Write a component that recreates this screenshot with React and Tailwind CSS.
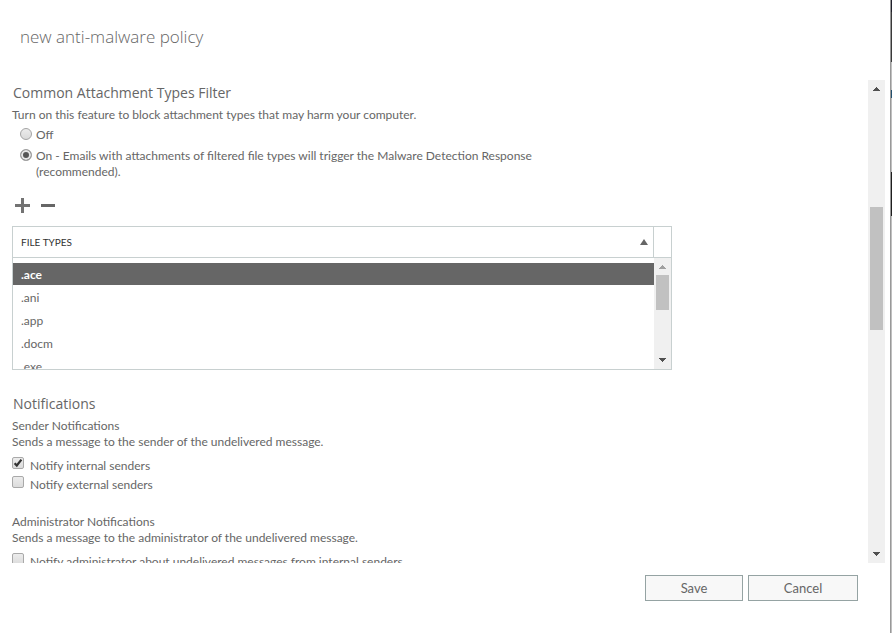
import React, { useState } from "react";

const fileTypes = [".ace", ".ani", ".app", ".docm", ".exe"];

const ArrowUp = ({ className }) => (
  <svg className={className} width="7" height="4" viewBox="0 0 7 4" shapeRendering="crispEdges" aria-hidden="true">
    <path fill="currentColor" d="M3 0h1v1h1v1h1v1h1v1H0V3h1V2h1V1h1z" />
  </svg>
);

const ArrowDown = ({ className }) => (
  <svg className={className} width="7" height="4" viewBox="0 0 7 4" shapeRendering="crispEdges" aria-hidden="true">
    <path fill="currentColor" d="M0 0h7v1H6v1H5v1H4v1H3V3H2V2H1V1H0z" />
  </svg>
);

const Radio = ({ id, checked, onChange, children }) => (
  <div className="flex items-start gap-1 pl-2">
    <input
      id={id}
      type="radio"
      name="filter"
      checked={checked}
      onChange={onChange}
      className="mt-px size-3 shrink-0 appearance-none rounded-full border border-[#a3a3a3] bg-linear-to-b from-[#ececec] to-[#dadada] checked:bg-none checked:bg-[#555] checked:shadow-[inset_0_0_0_2px_#e6e6e6]"
    />
    <label htmlFor={id} className="max-w-[520px]">
      {children}
    </label>
  </div>
);

const Checkbox = ({ id, defaultChecked, children }) => (
  <div className="flex h-[19px] items-start gap-1.5">
    <span className="relative mt-px size-3 shrink-0">
      <input
        id={id}
        type="checkbox"
        defaultChecked={defaultChecked}
        className="peer block size-3 appearance-none rounded-xs border border-[#a9a9a9] bg-linear-to-b from-[#ececec] to-[#dcdcdc]"
      />
      <svg
        className="pointer-events-none absolute inset-0 hidden peer-checked:block"
        width="12"
        height="12"
        viewBox="0 0 12 12"
        aria-hidden="true"
      >
        <path d="M2.6 6.2l2.2 2.3L9.4 2.6" fill="none" stroke="#333" strokeWidth="2.2" />
      </svg>
    </span>
    <label htmlFor={id} className="pt-0.5">
      {children}
    </label>
  </div>
);

const App = () => {
  const [filter, setFilter] = useState("on");
  const [selected, setSelected] = useState(".ace");

  return (
    <div className="flex h-screen bg-white font-[Lato,sans-serif] text-[12px] leading-4 text-[#666]">
      <div className="flex min-w-0 flex-1 flex-col">
        <header className="flex h-20 shrink-0 items-start px-5 pt-6">
          <h1 className="font-['Open_Sans',sans-serif] text-[17px] leading-[26px] font-light">
            new anti-malware policy
          </h1>
        </header>

        <div className="flex min-h-0 flex-1 pr-[5px]">
          <main className="min-w-0 flex-1 overflow-y-auto pl-3 [scrollbar-width:none]">
            <section>
              <h2 className="pl-px font-['Open_Sans',sans-serif] text-[14px] leading-[26px]">
                Common Attachment Types Filter
              </h2>
              <p className="mt-px">
                Turn on this feature to block attachment types that may harm your computer.
              </p>
              <div className="mt-1 flex flex-col gap-[5px]">
                <Radio id="filter-off" checked={filter === "off"} onChange={() => setFilter("off")}>
                  Off
                </Radio>
                <Radio id="filter-on" checked={filter === "on"} onChange={() => setFilter("on")}>
                  On - Emails with attachments of filtered file types will trigger the Malware Detection
                  Response (recommended).
                </Radio>
              </div>

              <div className="mt-[17px] flex gap-2.5 pl-[3px]">
                <button type="button" aria-label="Add">
                  <svg width="15" height="16" viewBox="0 0 15 16" shapeRendering="crispEdges">
                    <path d="M0 7h15v3H0zM6 1h3v15H6z" fill="#737373" />
                  </svg>
                </button>
                <button type="button" aria-label="Remove">
                  <svg width="15" height="16" viewBox="0 0 15 16" shapeRendering="crispEdges">
                    <path d="M1 7h14v3H1z" fill="#666" />
                  </svg>
                </button>
              </div>

              <div className="mt-[13px] flex h-36 max-w-[660px] overflow-hidden border border-[#c8d0d0]">
                <table className="w-full flex-1 border-separate border-spacing-0 self-start text-left">
                  <thead>
                    <tr>
                      <th className="h-[31px] border-r border-b border-[#c8d0d0] py-0 pr-[5px] pl-2 font-normal text-[#333]">
                        <div className="flex items-center justify-between">
                          <span className="text-[10px]">FILE TYPES</span>
                          <svg width="8" height="6" viewBox="0 0 8 6" aria-hidden="true">
                            <path d="M4 0l4 6H0z" fill="#666" />
                          </svg>
                        </div>
                      </th>
                    </tr>
                  </thead>
                  <tbody className="before:block before:h-[5px]">
                    {fileTypes.map((type) => (
                      <tr key={type} onClick={() => setSelected(type)}>
                        <td
                          className={
                            type === selected
                              ? "h-[23px] border-b border-white bg-[#666] bg-clip-padding px-2 pt-0.5 pb-0 font-bold text-white"
                              : "h-[23px] border-b border-white px-2 pt-0.5 pb-0"
                          }
                        >
                          {type}
                        </td>
                      </tr>
                    ))}
                  </tbody>
                </table>
                <div className="flex w-[17px] shrink-0 flex-col">
                  <div className="h-[31px] shrink-0 border-b border-[#c8d0d0]" />
                  <div className="flex flex-1 flex-col items-center bg-[#f0f0f0] py-[7px]">
                    <ArrowUp className="text-[#a0a0a0]" />
                    <div className="mt-1.5 h-[35px] w-[13px] bg-[#c1c1c1]" />
                    <ArrowDown className="mt-auto text-[#505050]" />
                  </div>
                </div>
              </div>
            </section>

            <section className="mt-[21px]">
              <h2 className="pl-px font-['Open_Sans',sans-serif] text-[14px] leading-[26px]">Notifications</h2>
              <h3 className="mt-px">Sender Notifications</h3>
              <p>Sends a message to the sender of the undelivered message.</p>
              <div className="mt-1.5">
                <Checkbox id="internal-senders" defaultChecked>
                  Notify internal senders
                </Checkbox>
                <Checkbox id="external-senders">Notify external senders</Checkbox>
              </div>

              <h3 className="mt-5">Administrator Notifications</h3>
              <p>Sends a message to the administrator of the undelivered message.</p>
              <div className="mt-1.5">
                <Checkbox id="admin-internal">
                  Notify administrator about undelivered messages from internal senders
                </Checkbox>
              </div>
            </section>
          </main>

          <div className="flex w-[17px] shrink-0 flex-col items-center bg-[#f0f0f0] py-[7px]">
            <ArrowUp className="text-[#505050]" />
            <div className="mt-[116px] h-[123px] w-[13px] bg-[#c1c1c1]" />
            <ArrowDown className="mt-auto text-[#505050]" />
          </div>
        </div>

        <footer className="flex h-[70px] shrink-0 items-start justify-end gap-[5px] pt-3 pr-8">
          <button type="button" className="h-[26px] w-[98px] border border-[#95a3a3] bg-[#f8f8f8] text-[13px]">
            Save
          </button>
          <button type="button" className="h-[26px] w-[110px] border border-[#95a3a3] bg-[#f8f8f8] text-[13px]">
            Cancel
          </button>
        </footer>
      </div>

      {/* edge of the window behind the dialog */}
      <div className="flex w-0.5 shrink-0 flex-col border-l border-[#999] bg-[#c0c0c0]">
        <div className="h-3 bg-[#1f1f2b]" />
        <div className="h-[50px] bg-[#3a3a3a]" />
        <div className="mt-7 h-2 bg-[#23506e]" />
        <div className="mt-[74px] h-11 bg-[#1e1e1e]" />
      </div>
    </div>
  );
};

export default App;
